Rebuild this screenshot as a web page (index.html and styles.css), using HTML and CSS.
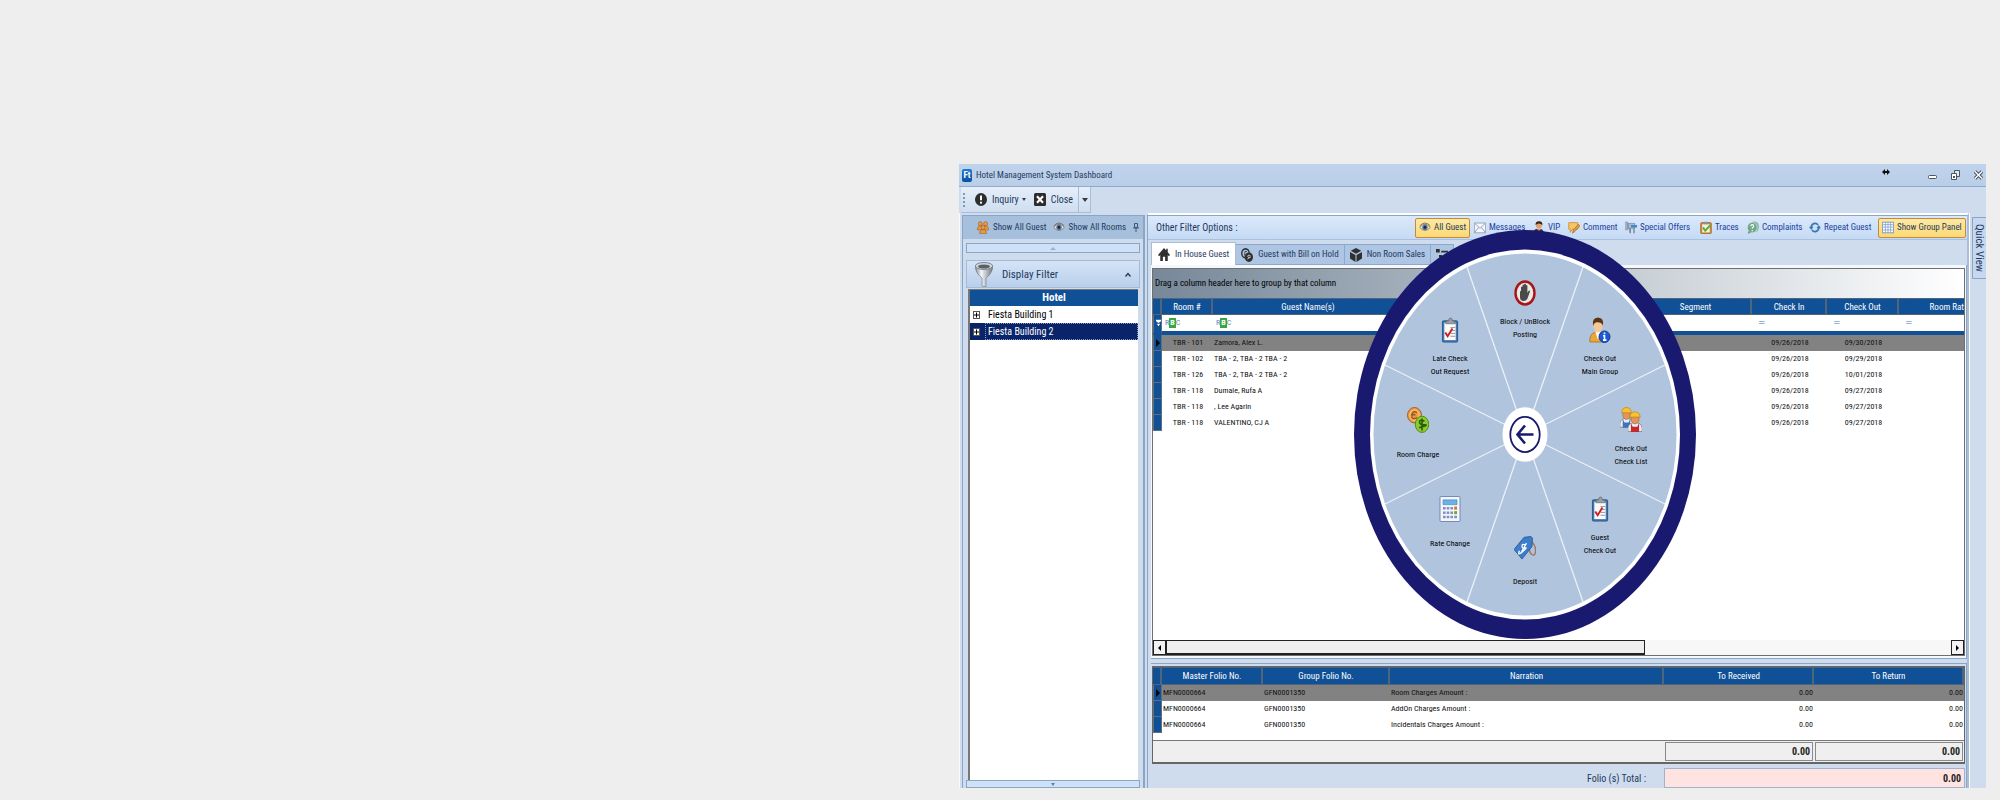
FILE: index.html
```html
<!DOCTYPE html>
<html lang="en">
<head>
<meta charset="utf-8">
<title>Hotel Management System Dashboard</title>
<link rel="stylesheet" href="styles.css">
</head>
<body>
<svg class="defs" aria-hidden="true">
  <defs>
    <linearGradient id="silver" x1="0" x2="1" y1="0" y2="0"><stop offset="0" stop-color="#7d858d"/><stop offset=".35" stop-color="#f4f6f8"/><stop offset="1" stop-color="#6d757d"/></linearGradient>
    <symbol id="eye" viewBox="0 0 16 16" preserveAspectRatio="none"><path d="M1 8Q8 0 15 8Q8 15 1 8z" fill="#f3ede4" stroke="#7c6a55"/><circle cx="8" cy="7.800" r="3.600" fill="#54779b"/><circle cx="8" cy="7.800" r="1.700" fill="#1a2430"/><path d="M1 6Q8-1 15 6" fill="none" stroke="#6b5a4b"/></symbol>
    <symbol id="clip" viewBox="0 0 20 27" preserveAspectRatio="none"><rect x="1.500" y="4" width="16" height="22" rx="1" fill="#3f7ab8" stroke="#285684"/><path d="M3.500 6h12v18h-12z" fill="#fbfbfc"/><path d="M5 6q0-2 3-2q0-3 2-3t2 3q3 0 3 2v1H5z" fill="#9a9fa3" stroke="#63686c" stroke-width=".7"/><path d="M10 11h5M10 14h5M10 17h5M10 20h5" stroke="#8d9398"/><path d="M4.500 16l2.500 4 5-8" fill="none" stroke="#cf1f1f" stroke-width="2"/></symbol>
    <symbol id="house" viewBox="0 0 16 16" preserveAspectRatio="none"><path d="M8 1L0 9l1.500 1.500L3 9v7h3.500v-5h3v5H13V9l1.500 1.500L16 9l-3-3V2h-2v2z" fill="#303030"/></symbol>
    <symbol id="person" viewBox="0 0 20 27" preserveAspectRatio="none"><path d="M1 26q-1-9 6-10h5q6 1 6 10z" fill="#e9a63a" stroke="#9a6516" stroke-width=".7"/><path d="M7 15l3 9 3-9z" fill="#fff"/><ellipse cx="10" cy="9" rx="5" ry="7" fill="#f4c797"/><path d="M4.500 9Q3 1 10 0.500Q17 1 15.500 9Q14 5 8 5.500Q6 6 4.500 9z" fill="#5a3417"/></symbol>
    <symbol id="worker" viewBox="0 0 12 22" preserveAspectRatio="none"><path d="M0 21q-1-8 4-9h4q5 1 4 9z" fill="#e9eef5" stroke="#7d6a5a" stroke-width=".6"/><path d="M2.500 12v9.500h7V12l-1.500 4h-4z" fill="currentColor"/><ellipse cx="6" cy="8" rx="3.500" ry="5" fill="#e0955c" stroke="#9c5b2c" stroke-width=".5"/><path d="M1.500 6Q2 .5 6 .5Q10 .5 10.500 6z" fill="#f7c12f" stroke="#b97c11" stroke-width=".6"/></symbol>
  </defs>
</svg>

<main class="window">
  <header class="titlebar">
    <span class="logo">Ft</span>
    <h1>Hotel Management System Dashboard</h1>
    <svg class="resize" viewBox="0 0 8 6" aria-hidden="true"><path d="M0 3l3-3v2h2V0l3 3-3 3V4H3v2z" fill="#111"/></svg>
    <div class="winbtns">
      <button aria-label="Minimize"><svg viewBox="0 0 9 10"><rect x=".5" y="5.500" width="8" height="3" rx="1" fill="#fff" stroke="#4b5561"/></svg></button>
      <button aria-label="Restore"><svg viewBox="0 0 9 10"><path d="M3.500 .5h5v6h-5z" fill="#dfe8f3" stroke="#4b5561"/><path d="M.5 3.500h5v6h-5z" fill="#fff" stroke="#4b5561"/><path d="M2 6h2v2H2z" fill="#4b5561"/></svg></button>
      <button aria-label="Close window"><svg viewBox="0 0 9 10"><path d="M1 1.500l7 7M8 1.500l-7 7" stroke="#4b5561" stroke-width="3.400"/><path d="M1 1.500l7 7M8 1.500l-7 7" stroke="#fff" stroke-width="1.400"/></svg></button>
    </div>
  </header>

  <nav class="toolbar" aria-label="Main">
    <div class="strip">
      <span class="grip"></span>
      <button class="tool"><svg viewBox="0 0 16 16" preserveAspectRatio="none"><circle cx="8" cy="8" r="8" fill="#2d2d2d"/><path d="M8 3v6" stroke="#fff" stroke-width="2.600"/><circle cx="8" cy="12" r="1.400" fill="#fff"/></svg>Inquiry<i class="caret"></i></button>
      <button class="tool"><svg viewBox="0 0 16 16" preserveAspectRatio="none"><rect width="16" height="16" rx="2" fill="#2d2d2d"/><path d="M4 4l8 8M12 4l-8 8" stroke="#fff" stroke-width="3"/></svg>Close</button>
      <button class="more" aria-label="Toolbar options"><i class="caret"></i></button>
    </div>
  </nav>

  <div class="body">
    <aside class="side">
      <div class="sidehead">
        <button class="tool"><svg viewBox="0 0 16 16" preserveAspectRatio="none"><g fill="#e79a45" stroke="#9c5615" stroke-width=".7"><circle cx="4.500" cy="3.500" r="2.700"/><circle cx="11.500" cy="3.500" r="2.700"/><path d="M.5 11q0-5 4-5t4 5zM7.500 11q0-5 4-5t4 5z"/><circle cx="8" cy="8" r="2.600"/><path d="M3.500 15.500q0-5 4.500-5t4.500 5z"/></g></svg>Show All Guest</button>
        <button class="tool"><svg viewBox="0 0 16 16" preserveAspectRatio="none"><use href="#eye"/></svg>Show All Rooms</button>
        <button class="pin" aria-label="Pin panel"><svg viewBox="0 0 6 9"><path d="M1.500 .5h3v4h-3zM0 5h6M3 5v4" fill="none" stroke="#42586f"/></svg></button>
      </div>
      <button class="scroll-up" aria-label="Scroll up"><i class="caret up"></i></button>
      <button class="filterhead" aria-expanded="true">
        <svg class="funnel" viewBox="0 0 18 25" preserveAspectRatio="none"><path d="M0 4q1 8 7 12v8l4 1v-9q6-4 7-12z" fill="url(#silver)" stroke="#6d757d" stroke-width=".6"/><ellipse cx="9" cy="4" rx="8.700" ry="3.500" fill="#cfd5da" stroke="#808890"/><ellipse cx="9" cy="4.500" rx="6" ry="2" fill="#59626b"/></svg>
        <span>Display Filter</span>
        <svg class="chev" viewBox="0 0 6 5"><path d="M.5 4.500L3 1.500l2.500 3" fill="none" stroke="#26394e" stroke-width="1.300"/></svg>
      </button>
      <div class="tree">
        <h2>Hotel</h2>
        <ul>
          <li><button class="plus" aria-label="Expand Fiesta Building 1"><svg viewBox="0 0 5 6"><path d="M0 3h5M2.500 .5v5" stroke="#000"/></svg></button><span>Fiesta Building 1</span></li>
          <li class="sel"><button class="plus" aria-label="Expand Fiesta Building 2"><svg viewBox="0 0 5 6"><path d="M0 3h5M2.500 .5v5" stroke="#000"/></svg></button><span>Fiesta Building 2</span></li>
        </ul>
      </div>
      <button class="scroll-down" aria-label="Scroll down"><i class="caret"></i></button>
    </aside>

    <section class="content">
      <div class="options">
        <span class="lead">Other Filter Options :</span>
        <div class="optbtns">
          <button class="on"><svg viewBox="0 0 16 16" preserveAspectRatio="none"><use href="#eye"/></svg>All Guest</button>
          <button><svg viewBox="0 0 16 16" preserveAspectRatio="none"><path d="M.5 2.500h15v12H.5z" fill="#f5f7fb" stroke="#8a94a4"/><path d="M1 3l7 6 7-6M1 14l5-6M15 14l-5-6" fill="none" stroke="#7c8bb5"/></svg>Messages</button>
          <button><svg viewBox="0 0 20 27" preserveAspectRatio="none"><path d="M1 26q-1-9 6-10h5q6 1 6 10z" fill="#33363d"/><path d="M7 15l3 10 3-10z" fill="#fff"/><path d="M9 17h2l1 6-2 3-2-3z" fill="#c22a2a"/><ellipse cx="10" cy="9" rx="5" ry="7" fill="#dca277"/><path d="M4.500 9Q3 1 10 .5Q17 1 15.500 9Q14 5 8 5.500Q6 6 4.500 9z" fill="#3c2114"/></svg>VIP</button>
          <button><svg viewBox="0 0 16 16" preserveAspectRatio="none"><path d="M1 2h12v8H6l-3 4v-4H1z" fill="#f6c566" stroke="#c98a2c"/><path d="M6 15l1-4 7-7 2 2-7 7z" fill="#e79a3a" stroke="#8d5a1b" stroke-width=".7"/></svg>Comment</button>
          <button><svg viewBox="0 0 16 16" preserveAspectRatio="none"><path d="M1 1l3 1v8l-3 1zM4 3h9v6H4z" fill="#a8bdd3" stroke="#6b7f95" stroke-width=".8"/><path d="M8 5h8v3H8z" fill="#3b87c8"/><path d="M5 9h3v6H6zM11 9h2v6h-2z" fill="#7f8b97"/></svg>Special Offers</button>
          <button><svg viewBox="0 0 16 16" preserveAspectRatio="none"><rect x="1" y="2" width="14" height="13.500" rx="1" fill="#d98a35" stroke="#9a5c1c"/><path d="M3 4h10v10H3z" fill="#f4f0e6"/><path d="M5 1h6v3H5z" fill="#8b8f94"/><path d="M4 8l3 4 7-7" fill="none" stroke="#5eb024" stroke-width="2.600"/></svg>Traces</button>
          <button><svg viewBox="0 0 16 16" preserveAspectRatio="none"><path d="M6 1q9-2 10 5q0 5-4 8l1-4" fill="#8ab9a3"/><circle cx="7" cy="8" r="6.500" fill="#6fa68d" stroke="#e3eee9" stroke-width=".7"/><path d="M2 12l-1 4 5-2z" fill="#6fa68d"/><path d="M5 6.500q0-2 2-2t2 1.800q0 1-2 2.200v1M7 11v1.500" fill="none" stroke="#fff" stroke-width="1.500"/></svg>Complaints</button>
          <button><svg viewBox="0 0 16 16" preserveAspectRatio="none"><path d="M3 8a5 5 0 0 1 9-3M13 8a5 5 0 0 1-9 3" fill="none" stroke="#3478b6" stroke-width="2.200"/><path d="M0 7h6L3 11zM10 9h6l-3-4z" fill="#3478b6"/></svg>Repeat Guest</button>
          <button class="on"><svg viewBox="0 0 16 16" preserveAspectRatio="none"><path d="M.5 1.500h15v13H.5z" fill="#fff" stroke="#5b7fb4"/><path d="M1 4.500h14M1 7.500h14M1 11h14M4.500 2v12M8 2v12M11.500 2v12" stroke="#7f9dcb"/></svg>Show Group Panel</button>
        </div>
      </div>

      <div class="tabs" role="tablist">
        <button role="tab" aria-selected="true"><svg viewBox="0 0 16 16" preserveAspectRatio="none"><use href="#house"/></svg>In House Guest</button>
        <button role="tab" aria-selected="false"><svg viewBox="0 0 16 16" preserveAspectRatio="none"><circle cx="6" cy="6" r="5" fill="none" stroke="#303030" stroke-width="1.800"/><path d="M8 4q-4-1-3 2t-1 2" fill="none" stroke="#303030"/><circle cx="10.500" cy="10.500" r="5.500" fill="#303030"/><path d="M12.500 8.500q-4-1-3.500 1t3 1-3.500 2" fill="none" stroke="#dbe6f3"/></svg>Guest with Bill on Hold</button>
        <button role="tab" aria-selected="false"><svg viewBox="0 0 16 16" preserveAspectRatio="none"><path d="M8 0l7 3-7 3.500L1 3zM0 4.500l7.300 3.500v8L0 12zM16 4.500L8.700 8v8l7.300-4z" fill="#303030"/></svg>Non Room Sales</button>
        <button role="tab" aria-selected="false" aria-label="Groups"><svg viewBox="0 0 16 16" preserveAspectRatio="none"><path d="M0 1h5v4H0zM7 3h9v2H7zM4 8h4v3H4zM10 9h6v2h-6z" fill="#303030"/></svg></button>
      </div>

      <div class="page">
        <div class="grid">
          <div class="grouppanel">Drag a column header here to group by that column</div>
          <div class="gridview">
            <table class="guests">
              <colgroup><col class="c-ind"><col class="c-room"><col class="c-name"><col><col class="c-seg"><col class="c-in"><col class="c-out"><col class="c-rate"></colgroup>
              <thead>
                <tr><th></th><th>Room #</th><th>Guest Name(s)</th><th></th><th>Segment</th><th>Check In</th><th>Check Out</th><th class="end">Room Rat</th></tr>
                <tr class="filter">
                  <td class="ind"><svg viewBox="0 0 6 8"><path d="M0 0h6v2L3 4 0 2zM1 5h4L3 8z" fill="#fff"/></svg></td>
                  <td><span class="abc">R<b>B</b>C</span></td><td><span class="abc">R<b>B</b>C</span></td><td></td><td></td>
                  <td><span class="eq">=</span></td><td><span class="eq">=</span></td><td><span class="eq">=</span></td>
                </tr>
              </thead>
              <tbody>
                <tr class="cur"><td class="ind"><i class="arrow"></i></td><td>TBR - 101</td><td>Zamora, Alex L.</td><td></td><td></td><td>09/26/2018</td><td>09/30/2018</td><td></td></tr>
                <tr><td class="ind"></td><td>TBR - 102</td><td>TBA - 2, TBA - 2 TBA - 2</td><td></td><td></td><td>09/26/2018</td><td>09/29/2018</td><td></td></tr>
                <tr><td class="ind"></td><td>TBR - 126</td><td>TBA - 2, TBA - 2 TBA - 2</td><td></td><td></td><td>09/26/2018</td><td>10/01/2018</td><td></td></tr>
                <tr><td class="ind"></td><td>TBR - 118</td><td>Dumale, Rufa A</td><td></td><td></td><td>09/26/2018</td><td>09/27/2018</td><td></td></tr>
                <tr><td class="ind"></td><td>TBR - 118</td><td>, Lee Agarin</td><td></td><td></td><td>09/26/2018</td><td>09/27/2018</td><td></td></tr>
                <tr><td class="ind"></td><td>TBR - 118</td><td>VALENTINO, CJ A</td><td></td><td></td><td>09/26/2018</td><td>09/27/2018</td><td></td></tr>
              </tbody>
            </table>
          </div>
          <div class="hscroll">
            <button aria-label="Scroll left"><i class="arrow left"></i></button>
            <span class="track"><span class="thumb"></span></span>
            <button aria-label="Scroll right"><i class="arrow"></i></button>
          </div>
        </div>
      </div>

      <div class="folio">
        <div class="foliogrid">
          <table class="folios">
            <colgroup><col class="c-ind"><col class="c-master"><col class="c-group"><col><col class="c-amt"><col class="c-amt"></colgroup>
            <thead><tr><th></th><th>Master Folio No.</th><th>Group Folio No.</th><th>Narration</th><th>To Received</th><th>To Return</th></tr></thead>
            <tbody>
              <tr class="cur"><td class="ind"><i class="arrow"></i></td><td>MFN0000664</td><td>GFN0001350</td><td>Room Charges Amount :</td><td>0.00</td><td>0.00</td></tr>
              <tr><td class="ind"></td><td>MFN0000664</td><td>GFN0001350</td><td>AddOn Charges Amount :</td><td>0.00</td><td>0.00</td></tr>
              <tr><td class="ind"></td><td>MFN0000664</td><td>GFN0001350</td><td>Incidentals Charges Amount :</td><td>0.00</td><td>0.00</td></tr>
            </tbody>
          </table>
          <div class="sums"><output>0.00</output><output>0.00</output></div>
        </div>
        <div class="total"><label for="total">Folio (s) Total :</label><input id="total" type="text" value="0.00" readonly></div>
      </div>
    </section>

    <div class="rail"><button>Quick View</button></div>
  </div>

  <nav class="wheel" aria-label="Guest actions">
    <svg class="disc" viewBox="0 0 342 409" aria-hidden="true">
      <ellipse cx="171" cy="204.500" rx="171" ry="204.500" fill="#191970"/>
      <ellipse cx="171" cy="204.500" rx="155" ry="185" fill="#fff"/>
      <ellipse cx="171" cy="204.500" rx="151.500" ry="181" fill="#b0c4de"/>
      <path d="M171 204.500L113 37M171 204.500L229 37M171 204.500L113 372M171 204.500L229 372M171 204.500L31 135M171 204.500L311 135M171 204.500L31 274M171 204.500L311 274" stroke="#fff" stroke-opacity=".75" stroke-width="1.300"/>
    </svg>
    <button class="hub" aria-label="Back"><svg viewBox="0 0 46 55"><ellipse cx="23" cy="27.500" rx="22.500" ry="27.200" fill="#fff"/><ellipse cx="23" cy="27.500" rx="14.700" ry="17.600" fill="none" stroke="#191970" stroke-width="1.800"/><path d="M31.500 27.500H16M23 18.500l-7.500 9 7.500 9" fill="none" stroke="#191970" stroke-width="2.600"/></svg></button>
    <button class="act a1"><svg viewBox="0 0 22 26" preserveAspectRatio="none"><ellipse cx="11" cy="13" rx="9.500" ry="11.500" fill="#e9e9e9" stroke="#a91414" stroke-width="2.400"/><path d="M6 12q0-1.500 1-1v-4q1-1 1.500 0V5q1-1 1.700 0V4q1-1 1.700 0v1.500q1-1 1.500 0V13l1-2q1.500-1 1.600.5L14 17q-1 4-4.500 4T6 17z" fill="#4a4a4a"/></svg><span>Block / UnBlock<br>Posting</span></button>
    <button class="act a2"><svg viewBox="0 0 22 27" preserveAspectRatio="none"><use href="#person" width="18" height="27"/><ellipse cx="15.500" cy="20.500" rx="5.500" ry="6" fill="#1c57d4" stroke="#123a8f"/><path d="M15.500 16v2M14 19.500h1.500v4M14 24h3.500" stroke="#fff" stroke-width="1.600" fill="none"/></svg><span>Check Out<br>Main Group</span></button>
    <button class="act a3"><svg viewBox="0 0 22 27" preserveAspectRatio="none"><g color="#3f73bd"><use href="#worker" width="13" height="22"/></g><g color="#c6282b"><use href="#worker" x="8" y="4.500" width="14" height="22"/></g></svg><span>Check Out<br>Check List</span></button>
    <button class="act a4"><svg viewBox="0 0 22 27" preserveAspectRatio="none"><use href="#clip" x="2" width="19" height="27"/></svg><span>Guest<br>Check Out</span></button>
    <button class="act a5"><svg viewBox="0 0 22 27" preserveAspectRatio="none"><path d="M17 7q5 5 4.500 11t-4 3-1-9" fill="none" stroke="#a0765a" stroke-width="1.400"/><path d="M0 16L10 3.500l7-1 1.500 2L18 13 8 26z" fill="#3c7cc9" stroke="#1f5596" stroke-width=".8"/><path d="M12 11.500q-4-2-4 1t3 2-2.500 4-3-1M12.500 9.500l-6 11" fill="none" stroke="#fff" stroke-width="1.300"/></svg><span>Deposit</span></button>
    <button class="act a6"><svg viewBox="0 0 22 27" preserveAspectRatio="none"><rect x="1" y=".5" width="20" height="26" rx="1" fill="#f3f6fc" stroke="#7288b4"/><path d="M4 4h14v5H4z" fill="#69b2e4" stroke="#3a83bd" stroke-width=".6"/><g fill="#8592bd"><path d="M4 11.500h2.600v2.600H4zM7.700 11.500h2.600v2.600H7.700zM11.400 11.500H14v2.600h-2.600zM4 16h2.600v2.600H4zM7.700 16h2.600v2.600H7.700zM11.400 16H14v2.600h-2.600zM4 20.500h2.600v2.600H4zM7.700 20.500h2.600v2.600H7.700zM11.400 20.500H14v2.600h-2.600zM15.200 20.500H18v2.600h-2.800z"/></g><path d="M15.200 11h2.800v3.200h-2.800z" fill="#e2702a"/><path d="M15.200 15.700h2.800v3.200h-2.800z" fill="#67ad23"/></svg><span>Rate Change</span></button>
    <button class="act a7"><svg viewBox="0 0 22 27" preserveAspectRatio="none"><ellipse cx="7.500" cy="8.500" rx="7" ry="8" fill="#e89b4b" stroke="#a8601b"/><ellipse cx="7.500" cy="8.500" rx="4.600" ry="5.500" fill="none" stroke="#f6cd98"/><path d="M10 6q-4-3-5 2.500T10 11M4 8h4.500" fill="none" stroke="#a05a16" stroke-width="1.400"/><ellipse cx="15" cy="18" rx="6.700" ry="8.400" fill="#8ccb2e" stroke="#4f8a12"/><path d="M17.500 14.500q-5-2-5 1t5 3-5.500 3M15 12v12.500" fill="none" stroke="#2b5c0a" stroke-width="1.600"/></svg><span>Room Charge</span></button>
    <button class="act a8"><svg viewBox="0 0 22 27" preserveAspectRatio="none"><use href="#clip" x="2" width="19" height="27"/></svg><span>Late Check<br>Out Request</span></button>
  </nav>
</main>
</body>
</html>
```
FILE: styles.css
```css
:root {
  --xs: 8px;
  --sm: 9px;
  --md: 10px;
  --lg: 11px;
  --blue: #0f5097;
  --ink: #1f3a60;
  --edge: #8ba5c4;
  --face: #cfdced;
}

* { box-sizing: border-box; }

body {
  margin: 0;
  min-height: 100vh;
  padding: 164px 14px 12px;
  display: flex;
  background: #eeeeee;
  font-family: "Roboto Condensed", "Liberation Sans Narrow", Roboto, sans-serif;
  font-size: var(--sm);
  line-height: 13px;
  color: var(--ink);
}

button, input {
  font: inherit;
  color: inherit;
  margin: 0;
  padding: 0;
  border: 0;
  background: none;
  white-space: nowrap;
}

svg { display: block; flex: none; }
.defs { position: absolute; width: 0; height: 0; }

.window {
  position: relative;
  width: 53%;
  max-width: 1027px;
  margin-left: auto;
  display: flex;
  flex-direction: column;
  background: var(--face);
}

/* title bar */
.titlebar {
  display: flex;
  align-items: center;
  gap: 4px;
  height: 23px;
  padding: 0 3px 0 3px;
  background: linear-gradient(#c0d3ec, #b9cee8);
  border-bottom: 1px solid #90aaca;
}
.logo {
  width: 10px;
  height: 13px;
  border-radius: 2px;
  background: linear-gradient(#1a7bd2, #0b4f9f);
  color: #fff;
  font-weight: bold;
  text-align: center;
}
h1 { margin: 0; font-size: var(--sm); font-weight: normal; }
.resize { width: 8px; height: 6px; margin: 0 34px 6px auto; }
.winbtns { display: flex; gap: 14px; }
.winbtns svg { width: 9px; height: 10px; }

/* toolbar */
.toolbar { height: 26px; padding-left: 2px; }
.strip {
  display: flex;
  align-items: center;
  width: 130px;
  height: 26px;
  padding-left: 2px;
  background: linear-gradient(#e6effa, #cfddef);
  border-right: 1px solid #a9bdd6;
  border-bottom: 1px solid #a9bdd6;
  font-size: var(--md);
}
.grip { width: 2px; height: 14px; border-left: 2px dotted #8099b8; margin-right: 10px; }
.tool { display: flex; align-items: center; gap: 4px; }
.tool svg { width: 12px; height: 13px; }
.strip .tool { margin-right: 8px; gap: 5px; }
.strip .tool + .tool { margin-right: 5px; }
.more { align-self: stretch; flex: 1; border-left: 1px solid #a9bdd6; display: flex; align-items: center; justify-content: center; }
.caret { display: inline-block; border: 3px solid transparent; border-top: 4px solid #333c48; border-bottom: 0; }
.strip .tool .caret { border-width: 3px 2px 0; margin-left: -2px; }
.caret.up { border-top: 0; border-bottom: 3px solid #9ab2d2; }

.body { flex: 1; display: flex; padding-left: 2px; border-left: 1px solid #f6f9fd; }

/* left panel */
.side {
  width: 183px;
  flex: none;
  display: flex;
  flex-direction: column;
  margin-top: 2px;
  padding: 0 3px;
  border-left: 1px solid var(--edge);
  border-right: 2px solid var(--edge);
  border-top: 1px solid var(--edge);
}
.sidehead {
  display: flex;
  align-items: center;
  height: 23px;
  margin: 0 -3px;
  padding: 0 4px 0 14px;
  gap: 6px;
  background: #a6bfdd;
}
.sidehead .tool { gap: 4px; }
.pin { margin-left: auto; }
.pin svg { width: 6px; height: 9px; }
.scroll-up, .scroll-down {
  display: flex;
  justify-content: center;
  align-items: center;
  height: 10px;
  background: #cfe1f7;
  border: 1px solid var(--edge);
}
.scroll-up { margin: 4px 0 7px; }
.scroll-down { height: 8px; }
.scroll-down .caret { border-width: 3px 2px 0; border-top-color: #5f7fa8; }
.filterhead {
  display: flex;
  align-items: center;
  height: 28px;
  padding: 0 8px;
  gap: 9px;
  background: linear-gradient(#d5e4f7, #b9cfea);
  border: 1px solid #a3bbd8;
  font-size: var(--lg);
}
.funnel { width: 18px; height: 25px; }
.chev { width: 6px; height: 5px; margin-left: auto; }
.tree {
  flex: 1;
  margin: 1px 2px 0 2px;
  background: #fff;
  border-left: 2px solid #777;
  border-top: 1px solid #777;
  color: #000;
  font-size: var(--md);
}
.tree h2 {
  margin: 0;
  height: 16px;
  line-height: 16px;
  text-align: center;
  font-size: var(--lg);
  background: var(--blue);
  color: #fff;
}
.tree ul { margin: 0; padding: 0; list-style: none; }
.tree li { display: flex; align-items: center; height: 17px; padding-left: 3px; }
.tree li span { flex: 1; margin-left: 5px; padding-left: 2px; line-height: 15px; border: 1px solid transparent; }
.plus { width: 7px; height: 8px; border: 1px solid #555; background: #fff; }
.plus svg { width: 5px; height: 6px; }
.tree .sel { background: #0a246a; color: #fff; }
.tree .sel span { border: 1px dotted #8d9bc9; }

/* right panel */
.content {
  flex: 1;
  min-width: 0;
  display: flex;
  flex-direction: column;
  margin-left: 2px;
  padding-left: 3px;
  border-left: 1px solid var(--edge);
  border-right: 2px solid #a9bdd6;
  border-top: 2px solid #fff;
}
.options {
  display: flex;
  align-items: center;
  justify-content: space-between;
  height: 25px;
  margin-left: -3px;
  padding-left: 8px;
  background: linear-gradient(#dbe9fb, #c5daf4);
  border-top: 1px solid var(--edge);
  border-bottom: 1px solid #a9c0de;
}
.lead { font-size: var(--md); }
.optbtns { display: grid; grid-template-columns: 57px 59px 35px 57px 75px 47px 62px 71px 89px; }
.optbtns button { display: flex; align-items: center; gap: 3px; height: 20px; padding-left: 2px; color: #1c3f9c; justify-self: start; }
.optbtns svg { width: 12px; height: 13px; }
.optbtns .on { padding: 0 3px; background: linear-gradient(#fde9a4, #fbd976); border: 1px solid #c28a3a; border-radius: 2px; color: #1f3a60; }

.tabs { display: flex; height: 23px; margin-top: 2px; align-items: flex-end; }
.tabs button {
  display: flex;
  align-items: center;
  gap: 5px;
  height: 21px;
  padding: 0 5px;
  background: #aec5e3;
  border: 1px solid #8ba9cf;
  border-left: 0;
}
.tabs svg { width: 12px; height: 14px; }
.tabs [aria-selected="true"] { height: 23px; background: #fff; border-color: #a9bdd6; border-left: 1px solid #a9bdd6; border-bottom: 0; padding: 0 6px; }

.page { flex: 1; display: flex; padding: 3px 1px 2px 1px; background: #f4f7fb; border: 1px solid var(--edge); border-left: 0; border-top: 0; }
.grid { flex: 1; min-width: 0; display: flex; flex-direction: column; background: #fff; border: 1px solid #6f6f6f; }
.grouppanel {
  display: flex;
  align-items: center;
  height: 29px;
  padding-left: 2px;
  color: #000;
  background: linear-gradient(90deg, #778899, #fff);
}
.gridview { flex: 1; overflow: hidden; }
table { width: 100%; border-collapse: separate; border-spacing: 0; table-layout: fixed; color: #111; font-size: var(--xs); }
.c-ind { width: 9px; }
.c-room { width: 51px; }
.c-name { width: 191px; }
.c-seg { width: 112px; }
.c-in { width: 75px; }
.c-out { width: 72px; }
.c-rate { width: 65px; }
.c-master { width: 101px; }
.c-group { width: 127px; }
.c-amt { width: 150px; }
th, td { height: 16px; padding: 0 0 0 1px; line-height: 14px; white-space: nowrap; overflow: hidden; }
th {
  height: 17px;
  background: var(--blue);
  color: #fff;
  font-size: var(--sm);
  font-weight: normal;
  border: 1px solid #50647c;
  border-left: 0;
  border-right-width: 2px;
}
th.end { text-align: right; border-right: 0; }
td.ind { padding: 0 2px; background: var(--blue); border: 1px solid #5f6f80; border-top: 0; }
.ind svg { width: 5px; height: 8px; }
.filter td { height: 20px; padding-bottom: 1px; border-bottom: 4px solid var(--blue); }
.abc { display: inline-flex; align-items: center; padding-left: 2px; color: #6a83b5; line-height: 10px; }
.abc b { background: #37a83f; color: #fff; padding: 0 1px; }
.eq { padding-left: 5px; color: #4a74b8; font-family: "DejaVu Sans", sans-serif; font-size: var(--sm); }
.cur td:not(.ind) { background: #828282; }
.guests tbody td:nth-child(2), .guests tbody td:nth-child(6), .guests tbody td:nth-child(7) { text-align: center; }
.folios th { height: 18px; }
.folios td:nth-child(n+5) { text-align: right; padding-right: 1px; }
.arrow { display: block; width: 0; border: 4px solid transparent; border-left: 4px solid #000; border-right: 0; }
.arrow.left { border-left: 0; border-right: 4px solid #000; }

.hscroll { display: flex; height: 15px; background: #f7f7f7; }
.hscroll button { width: 13px; display: flex; align-items: center; justify-content: center; border: 1px solid #222; background: #f3f3f3; }
.hscroll .arrow { border-top-width: 3px; border-bottom-width: 3px; border-left-width: 3px; }
.hscroll .arrow.left { border-left-width: 0; border-right-width: 3px; }
.track { flex: 1; display: flex; }
.thumb { width: 61%; background: #efefef; border: 1px solid #222; border-bottom-width: 2px; }

.folio { margin-top: 4px; padding: 2px 1px 0 1px; border-top: 1px solid var(--edge); border-right: 1px solid var(--edge); }
.foliogrid { background: #fff; border: 1px solid #666; border-bottom-width: 2px; }
.sums {
  display: flex;
  justify-content: flex-end;
  gap: 2px;
  height: 22px;
  margin-top: 7px;
  padding: 1px;
  background: #efefef;
  border-top: 1px solid #777;
}
.sums output, .total input { font-size: var(--md); font-weight: bold; color: #222; text-align: right; }
.sums output { width: 148px; padding-right: 2px; line-height: 17px; border: 1px solid #8a8a8a; }
.total { display: flex; align-items: center; justify-content: flex-end; gap: 18px; height: 24px; padding-top: 4px; font-size: var(--md); }
.total input { width: 301px; height: 20px; padding-right: 3px; background: #ffe3e0; border: 1px solid #9fb2cf; }

.rail { width: 17px; flex: none; padding: 4px 0 0 2px; border-left: 1px solid #fff; }
.rail button {
  width: 14px;
  height: 62px;
  writing-mode: vertical-rl;
  border: 1px solid var(--edge);
  border-right: 0;
  background: #c5d8ef;
  font-size: var(--lg);
  line-height: 13px;
}

/* radial menu over the grid */
.wheel { position: absolute; left: 395px; top: 66px; width: 342px; height: 409px; }
.disc { width: 342px; height: 409px; }
.hub { position: absolute; left: 148px; top: 177px; width: 46px; height: 55px; }
.act {
  position: absolute;
  width: 72px;
  display: flex;
  flex-direction: column;
  align-items: center;
  gap: 8px;
  color: #000;
  font-size: var(--xs);
}
.act svg { width: 22px; height: 26px; }
.act span { min-height: 27px; display: flex; align-items: center; }
.a1 { left: 135px; top: 50px; }
.a2 { left: 210px; top: 87px; }
.a3 { left: 241px; top: 177px; }
.a4 { left: 210px; top: 266px; }
.a5 { left: 135px; top: 304px; }
.a6 { left: 60px; top: 266px; }
.a7 { left: 28px; top: 177px; }
.a8 { left: 60px; top: 87px; }
```
